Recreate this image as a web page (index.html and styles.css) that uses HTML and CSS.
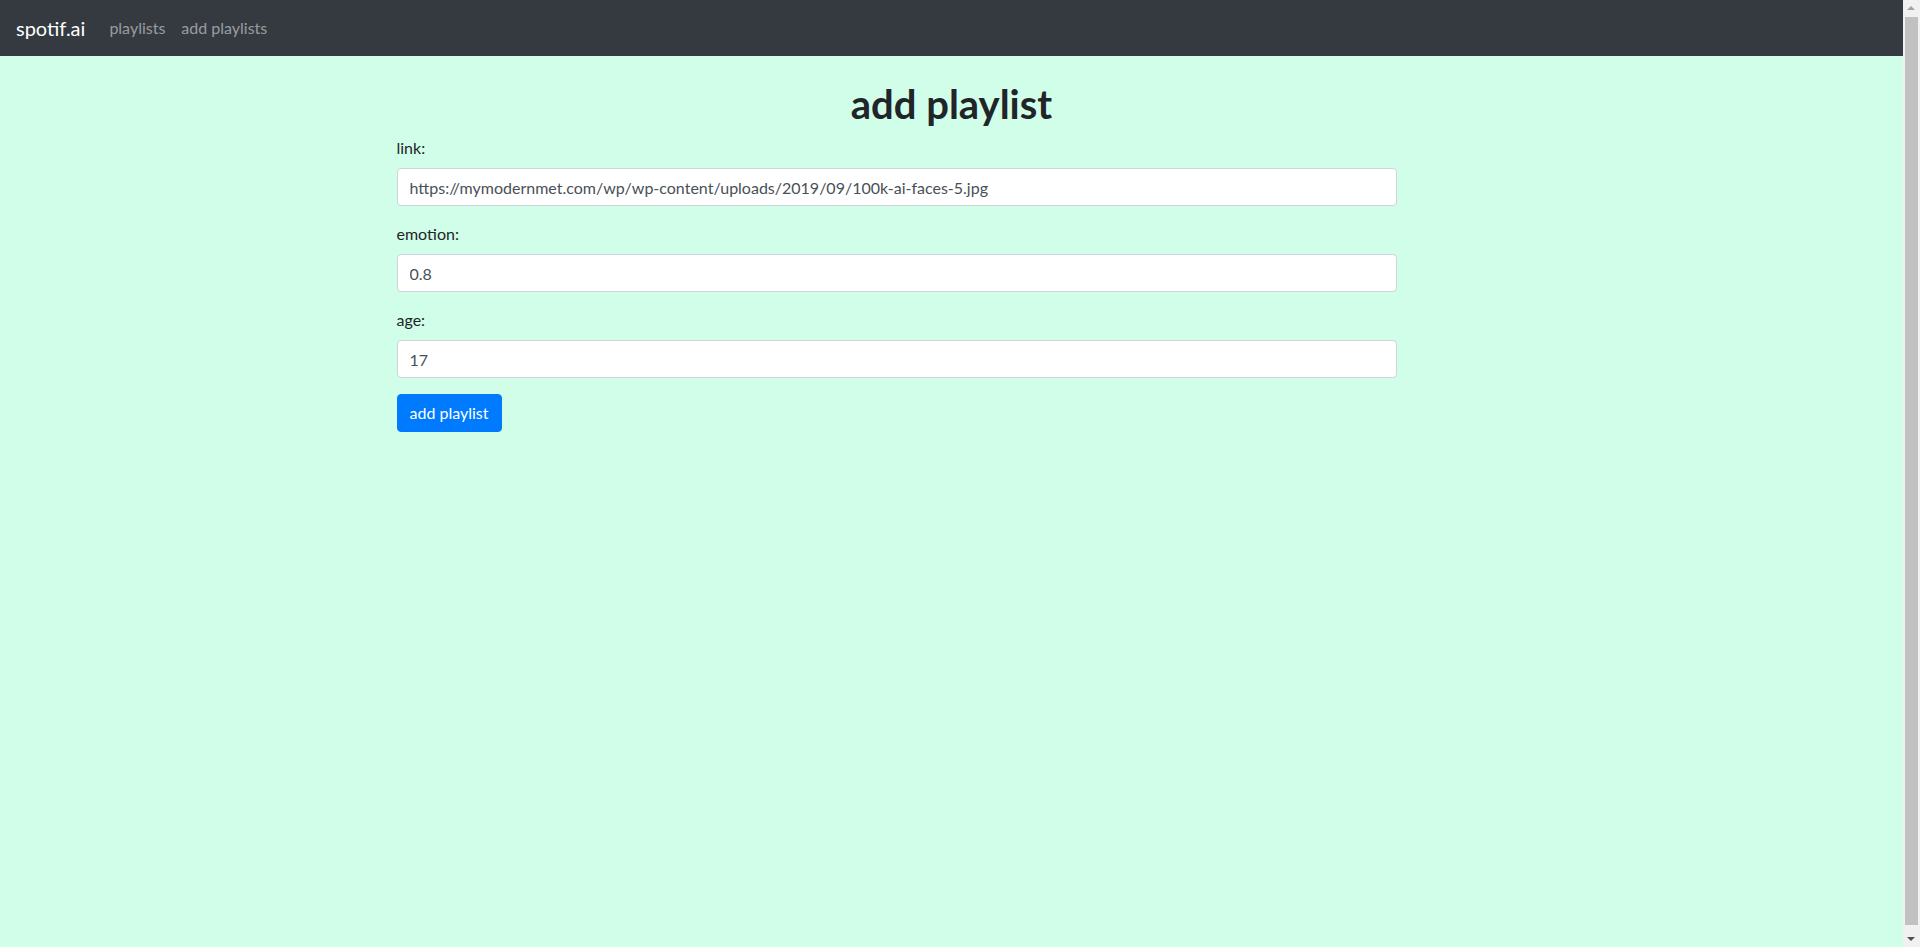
FILE: index.html
```html
<!DOCTYPE html>
<html lang="en">
<head>
<meta charset="utf-8">
<title>spotif.ai</title>
<link rel="stylesheet" href="styles.css">
</head>
<body>
<div class="app">
  <nav class="navbar">
    <a class="brand" href="#">spotif.ai</a>
    <a class="nav-link" href="#">playlists</a>
    <a class="nav-link" href="#">add playlists</a>
  </nav>
  <main class="container">
    <h1 class="title">add playlist</h1>
    <form class="form">
      <div class="group">
        <label class="label" for="link">link:</label>
        <input class="input" id="link" type="text" value="https://mymodernmet.com/wp/wp-content/uploads/2019/09/100k-ai-faces-5.jpg">
      </div>
      <div class="group">
        <label class="label" for="emotion">emotion:</label>
        <input class="input" id="emotion" type="text" value="0.8">
      </div>
      <div class="group">
        <label class="label" for="age">age:</label>
        <input class="input" id="age" type="text" value="17">
      </div>
      <button class="btn" type="button">add playlist</button>
    </form>
  </main>
</div>
<div class="scrollbar" aria-hidden="true">
  <span class="arrow arrow-up"></span>
  <span class="thumb"></span>
  <span class="arrow arrow-down"></span>
</div>
</body>
</html>
```
FILE: styles.css
```css
* { box-sizing: border-box; }
html, body { margin: 0; padding: 0; }
body {
  font-family: "Lato", "Roboto", sans-serif;
  font-size: 16px;
  line-height: 1.5;
  color: #212529;
  background: #d1fee8;
  min-height: 100vh;
}
.app { margin-right: 17px; }
.navbar {
  display: flex;
  align-items: center;
  height: 56px;
  padding: 0 16px;
  background: #343a40;
}
.brand {
  color: #fff;
  font-size: 20px;
  text-decoration: none;
  margin-right: 16px;
  line-height: 30px;
}
.nav-link {
  color: rgba(255,255,255,.5);
  text-decoration: none;
  padding: 8px;
}
.container {
  max-width: 1140px;
  margin: 0 auto;
  padding: 24px 15px 0;
}
.title {
  text-align: center;
  font-size: 40px;
  font-weight: 700;
  line-height: 1.2;
  margin: 0 0 8px;
}
.form { width: 1000px; }
.group { margin-bottom: 16px; }
.label { display: block; margin-bottom: 8px; }
.input {
  display: block;
  width: 100%;
  height: 38px;
  padding: 6px 12px;
  font: inherit;
  color: #495057;
  background: #fff;
  border: 1px solid #ced4da;
  border-radius: 4px;
}
.btn {
  font: inherit;
  color: #fff;
  background: #007bff;
  border: 1px solid #007bff;
  border-radius: 4px;
  padding: 6px 12px;
}
.scrollbar {
  position: fixed;
  top: 0;
  right: 0;
  width: 17px;
  height: 100%;
  background: #f1f1f1;
}
.thumb {
  position: absolute;
  left: 2px;
  right: 2px;
  top: 17px;
  bottom: 22px;
  background: #c1c1c1;
}
.arrow {
  position: absolute;
  left: 4px;
  width: 0;
  height: 0;
  border-left: 4px solid transparent;
  border-right: 4px solid transparent;
}
.arrow-up { top: 6px; border-bottom: 4px solid #a3a3a3; }
.arrow-down { bottom: 6px; border-top: 4px solid #505050; }
```
